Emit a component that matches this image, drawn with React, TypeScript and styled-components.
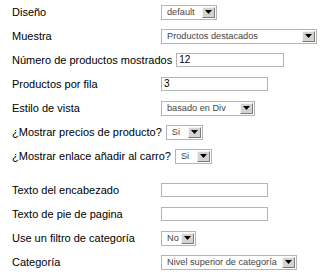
import styled, { createGlobalStyle } from 'styled-components';

const GlobalStyle = createGlobalStyle`
  body {
    margin: 0;
    background: #ffffff;
    font-family: "Liberation Sans", Arial, sans-serif;
  }
`;

interface FieldProps {
  label: string;
  children: React.ReactNode;
}

const Field = ({ label, children }: FieldProps) => (
  <Row>
    <Label>{label}</Label>
    {children}
  </Row>
);

interface SelectBoxProps {
  value: string;
  width: number;
}

const SelectBox = ({ value, width }: SelectBoxProps) => (
  <SelectFrame $width={width}>
    <SelectText>{value}</SelectText>
    <ArrowButton>
      <svg width="7" height="4" viewBox="0 0 7 4">
        <path d="M0 0 H7 L3.5 4 Z" fill="#000" />
      </svg>
    </ArrowButton>
  </SelectFrame>
);

export default function App() {
  return (
    <>
      <GlobalStyle />
      <Form>
        <Field label="Diseño">
          <SelectBox value="default" width={56} />
        </Field>
        <Field label="Muestra">
          <SelectBox value="Productos destacados" width={156} />
        </Field>
        <Field label="Número de productos mostrados">
          <TextBox $width={108}>12</TextBox>
        </Field>
        <Field label="Productos por fila">
          <TextBox $width={107}>3</TextBox>
        </Field>
        <Field label="Estilo de vista">
          <SelectBox value="basado en Div" width={94} />
        </Field>
        <Field label="¿Mostrar precios de producto?">
          <SelectBox value="Si" width={37} />
        </Field>
        <Field label="¿Mostrar enlace añadir al carro?">
          <SelectBox value="Si" width={37} />
        </Field>

        <Spacer />

        <Field label="Texto del encabezado">
          <TextBox $width={107} />
        </Field>
        <Field label="Texto de pie de pagina">
          <TextBox $width={107} />
        </Field>
        <Field label="Use un filtro de categoría">
          <SelectBox value="No" width={35} />
        </Field>
        <Field label="Categoría">
          <SelectBox value="Nivel superior de categoría" width={136} />
        </Field>
      </Form>
    </>
  );
}

const Form = styled.div`
  display: flex;
  flex-direction: column;
  padding-left: 12px;
`;

const Row = styled.div`
  display: flex;
  align-items: center;
  height: 24px;
`;

const Spacer = styled.div`
  height: 10px;
`;

const Label = styled.span`
  min-width: 145px;
  margin-right: 4px;
  font-size: 11px;
  color: #000000;
  white-space: nowrap;
`;

const SelectFrame = styled.div<{ $width: number }>`
  box-sizing: border-box;
  width: ${p => p.$width}px;
  height: 15px;
  display: flex;
  align-items: center;
  justify-content: space-between;
  gap: 1px;
  border: 1px solid #b5b5b5;
  background: #ffffff;
  padding: 0 1px 0 5px;
`;

const SelectText = styled.span`
  font-size: 9.2px;
  color: #444444;
  white-space: nowrap;
  overflow: hidden;
`;

const ArrowButton = styled.span`
  box-sizing: border-box;
  flex-shrink: 0;
  width: 13px;
  height: 11px;
  display: flex;
  align-items: center;
  justify-content: center;
  background: #d6d3ce;
  border-top: 1px solid #f4f4f4;
  border-left: 1px solid #f4f4f4;
  border-right: 1px solid #7a7a7a;
  border-bottom: 1px solid #7a7a7a;
`;

const TextBox = styled.div<{ $width: number }>`
  box-sizing: border-box;
  width: ${p => p.$width}px;
  height: 14px;
  border: 1px solid #b5b5b5;
  background: #ffffff;
  padding-left: 2px;
  font-size: 10px;
  line-height: 12px;
  color: #000000;
`;
